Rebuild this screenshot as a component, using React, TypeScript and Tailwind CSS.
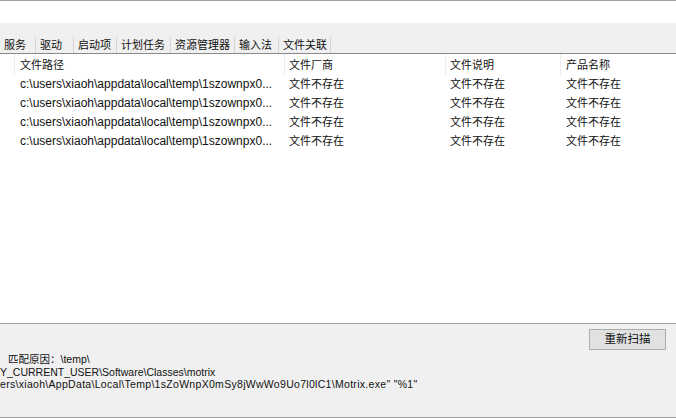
import React from "react";

const tabs = [
  { label: "服务", w: "w-[36px]" },
  { label: "驱动", w: "w-[38px]" },
  { label: "启动项", w: "w-[43px]" },
  { label: "计划任务", w: "w-[54px]" },
  { label: "资源管理器", w: "w-[64px]" },
  { label: "输入法", w: "w-[44px]" },
  { label: "文件关联", w: "w-[52px]" },
];

const rows = Array.from({ length: 4 }, () => ({
  path: "c:\\users\\xiaoh\\appdata\\local\\temp\\1szownpx0...",
}));

export default function App() {
  return (
    <div
      className="w-[676px] h-[418px] flex flex-col bg-white overflow-hidden text-[#111]"
      style={{ fontFamily: '"Liberation Sans", "Noto Sans CJK SC", sans-serif' }}
    >
      <div className="h-px bg-[#a0a0a0] shrink-0" />
      <div className="h-[22px] bg-white shrink-0" />
      <div className="h-[30px] bg-[#f0f0f0] shrink-0 flex items-end">
        {tabs.map((t) => (
          <div
            key={t.label}
            className={`${t.w} h-[16px] flex items-center pl-[4px] border-r border-[#d4d4d4] text-[11px] leading-[16px] whitespace-nowrap`}
          >
            {t.label}
          </div>
        ))}
      </div>
      <div className="flex-1 flex flex-col border-t border-[#8a8a8a] bg-white">
        <div className="h-[21px] flex items-center text-[11px] leading-[22px] shrink-0">
          <div className="w-[15px] h-full border-r border-[#ececec]" />
          <div className="w-[270px] h-full border-r border-[#ececec] pl-[5px]">文件路径</div>
          <div className="w-[161px] h-full border-r border-[#ececec] pl-[4px]">文件厂商</div>
          <div className="w-[115px] h-full border-r border-[#ececec] pl-[4px]">文件说明</div>
          <div className="flex-1 h-full pl-[5px]">产品名称</div>
        </div>
        {rows.map((r, i) => (
          <div key={i} className="h-[19px] flex items-center shrink-0">
            <div className="w-[15px]" />
            <div className="w-[270px] pl-[5px] text-[12px] leading-[19px] whitespace-nowrap">{r.path}</div>
            <div className="w-[161px] pl-[4px] text-[11px] leading-[19px]">文件不存在</div>
            <div className="w-[115px] pl-[4px] text-[11px] leading-[19px]">文件不存在</div>
            <div className="flex-1 pl-[5px] text-[11px] leading-[19px]">文件不存在</div>
          </div>
        ))}
      </div>
      <div className="h-[95px] shrink-0 bg-[#f0f0f0] border-t border-b border-[#a0a0a0] flex flex-col">
        <div className="flex justify-end pt-[5px] pr-[10px]">
          <button className="w-[77px] h-[21px] bg-[#e1e1e1] border border-[#adadad] text-[11.5px] leading-[19px] text-[#111]">
            重新扫描
          </button>
        </div>
        <div className="mt-[3px] text-[10.5px] leading-[12.5px] whitespace-nowrap">
          <div className="pl-[8px]">匹配原因：\temp\</div>
          <div>Y_CURRENT_USER\Software\Classes\motrix</div>
          <div className="tracking-[0.3px]">{'ers\\xiaoh\\AppData\\Local\\Temp\\1sZoWnpX0mSy8jWwWo9Uo7l0lC1\\Motrix.exe" "%1"'}</div>
        </div>
      </div>
    </div>
  );
}
